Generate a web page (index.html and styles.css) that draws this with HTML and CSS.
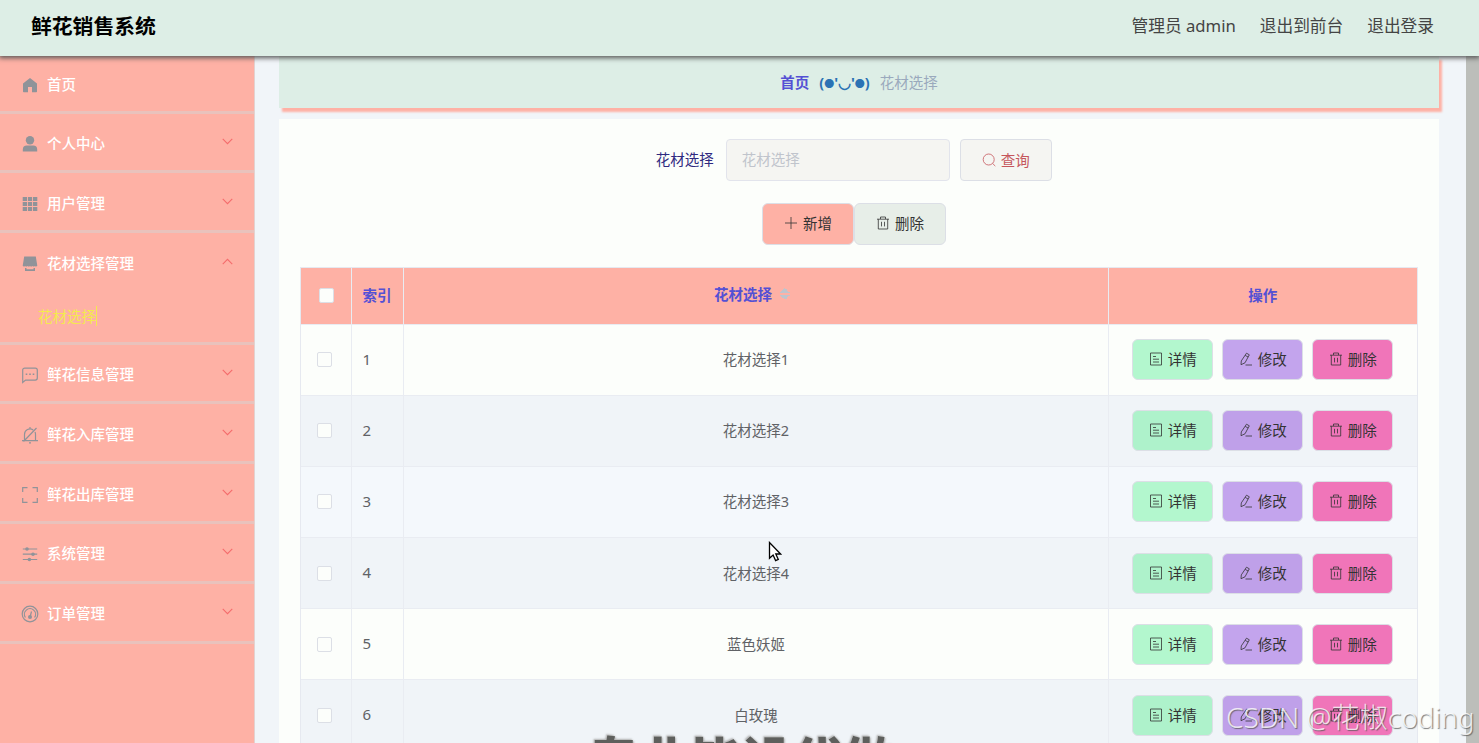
FILE: index.html
```html
<!DOCTYPE html>
<html lang="zh-CN">

<head>
    <meta charset="UTF-8">
    <meta name="viewport" content="width=device-width, initial-scale=1.0">
    <title>鲜花销售系统</title>
    <link rel="stylesheet" href="styles.css">
</head>

<body>
    <svg class="sprite">
        <symbol id="down" viewBox="0 0 12 12"><path d="M1.600 3.600 6 8l4.400-4.400" /></symbol>
        <symbol id="doc" viewBox="0 0 14 14"><path d="M1.500 1h11v12h-11zM4 4.500h3M4 7.200h6M4 10h6" /></symbol>
        <symbol id="edit" viewBox="0 0 14 14"><path d="M7.500 1.200 10.300 2.800 6 10.800 2 12.700 2.300 8.900zM6.200 3.400 9.100 5M6.500 13H13" /></symbol>
        <symbol id="trash" viewBox="0 0 14 14"><path d="M1 3.200h12M4.500 3V1h5v2M2.300 3.200V13h9.400V3.200M5.500 5.800v4.600M8.500 5.800v4.600" /></symbol>
        <symbol id="plus" viewBox="0 0 14 14"><path d="M7 1v12M1 7h12" /></symbol>
        <symbol id="search" viewBox="0 0 14 14"><circle cx="6.700" cy="6.500" r="5.500" /><path d="m10.700 10.500 2.600 2.600" /></symbol>
    </svg>

    <div class="header">
        <div class="title">鲜花销售系统</div>
        <div class="user">
            <span>管理员 admin</span>
            <span>退出到前台</span>
            <span>退出登录</span>
        </div>
    </div>

    <div class="wrap">
        <div class="menu">
            <div class="menuItem first">
                <svg class="icon" viewBox="0 0 18 18"><path class="fill" d="M9 2 16 7.400V15.500a.7.700 0 0 1-.7.700H11V11H7v5.200H2.700a.7.700 0 0 1-.7-.7V7.400z" /></svg>
                <span>首页</span>
            </div>
            <div class="menuItem">
                <svg class="icon" viewBox="0 0 18 18"><circle class="fill" cx="9" cy="5.200" r="4.200" /><path class="fill" d="M1.800 16.600v-2a4 4 0 0 1 4-4h6.400a4 4 0 0 1 4 4v2z" /></svg>
                <span>个人中心</span>
                <svg class="arrow"><use href="#down" /></svg>
            </div>
            <div class="menuItem">
                <svg class="icon" viewBox="0 0 18 18"><path class="fill" d="M1.700 2h4.300v4H1.700zM6.900 2h4.200v4H6.900zM12 2h4.300v4H12zM1.700 7h4.300v4H1.700zM6.900 7h4.200v4H6.900zM12 7h4.300v4H12zM1.700 12h4.300v4H1.700zM6.900 12h4.200v4H6.900zM12 12h4.300v4H12z" /></svg>
                <span>用户管理</span>
                <svg class="arrow"><use href="#down" /></svg>
            </div>
            <div class="subMenu">
                <div class="menuItem">
                    <svg class="icon" viewBox="0 0 18 18"><path class="fill" d="M3.200 1.500h11.600l1.500 9.300q-1 1.400-2.400.2-1.200 1.200-2.500 0-1.200 1.200-2.400 0-1.200 1.200-2.500 0-1.200 1.200-2.400 0-1.500 1.200-2.400-.2zM4 13h1.500v1.200h7V13H14v3H4z" /></svg>
                    <span>花材选择管理</span>
                    <svg class="arrow up"><use href="#down" /></svg>
                </div>
                <div class="subItem"><span>花材选择</span></div>
            </div>
            <div class="menuItem">
                <svg class="icon" viewBox="0 0 18 18"><path d="M1.700 16.500V4.100a2 2 0 0 1 2-2h10.600a2 2 0 0 1 2 2v8a2 2 0 0 1-2 2H4.600z" /><path class="fill" d="M4.700 7.400h1.600V9H4.700zM8.200 7.400h1.600V9H8.200zM11.700 7.400h1.600V9h-1.600z" /></svg>
                <span>鲜花信息管理</span>
                <svg class="arrow"><use href="#down" /></svg>
            </div>
            <div class="menuItem">
                <svg class="icon" viewBox="0 0 18 18"><path d="M1 14.600h16M3.500 14.300V8.500a5.500 5.500 0 0 1 8.700-4.500M14 6a6 6 0 0 1 .5 2.500v5.800M9 1v2M8 16.800h2M15.500 2 2.500 15.500" /></svg>
                <span>鲜花入库管理</span>
                <svg class="arrow"><use href="#down" /></svg>
            </div>
            <div class="menuItem">
                <svg class="icon" viewBox="0 0 18 18"><path d="M1.700 6V1.700H6.500M11.500 1.700h4.800V6M16.300 12v4.300h-4.800M6.500 16.300H1.700V12" /></svg>
                <span>鲜花出库管理</span>
                <svg class="arrow"><use href="#down" /></svg>
            </div>
            <div class="menuItem">
                <svg class="icon" viewBox="0 0 18 18"><path d="M1.800 4h14.400M1.800 9.200h14.400M1.800 14.500h14.400" /><circle class="fill" cx="6" cy="4" r="1.800" /><circle class="fill" cx="12" cy="9.200" r="1.800" /><circle class="fill" cx="8.400" cy="14.500" r="1.800" /></svg>
                <span>系统管理</span>
                <svg class="arrow"><use href="#down" /></svg>
            </div>
            <div class="menuItem">
                <svg class="icon" viewBox="0 0 18 18"><circle cx="9" cy="9" r="7.800" /><path d="M4.400 12.500a5.600 5.600 0 1 1 9.200 0" /><circle class="fill" cx="9" cy="12" r="2" /><path d="M9.200 11.500 10.500 6.500" /></svg>
                <span>订单管理</span>
                <svg class="arrow"><use href="#down" /></svg>
            </div>
        </div>

        <div class="main">
            <div class="crumb">
                <span class="home">首页</span>
                <span class="face">(<i>●</i>'◡'<i>●</i>)</span>
                <span class="current">花材选择</span>
            </div>

            <div class="card">
                <div class="search">
                    <label for="material">花材选择</label>
                    <input id="material" type="text" placeholder="花材选择">
                    <button class="btn query"><svg><use href="#search" /></svg>查询</button>
                </div>
                <div class="tools">
                    <button class="btn add"><svg><use href="#plus" /></svg>新增</button>
                    <button class="btn remove"><svg><use href="#trash" /></svg>删除</button>
                </div>

                <div class="table">
                    <div class="row head">
                        <div class="cell"><i class="check"></i></div>
                        <div class="cell index">索引</div>
                        <div class="cell name">花材选择<span class="sort"></span></div>
                        <div class="cell ops">操作</div>
                    </div>
                    <div class="row">
                        <div class="cell"><i class="check"></i></div>
                        <div class="cell index">1</div>
                        <div class="cell name">花材选择1</div>
                        <div class="cell ops">
                            <button class="btn detail"><svg><use href="#doc" /></svg>详情</button>
                            <button class="btn edit"><svg><use href="#edit" /></svg>修改</button>
                            <button class="btn del"><svg><use href="#trash" /></svg>删除</button>
                        </div>
                    </div>
                    <div class="row striped">
                        <div class="cell"><i class="check"></i></div>
                        <div class="cell index">2</div>
                        <div class="cell name">花材选择2</div>
                        <div class="cell ops">
                            <button class="btn detail"><svg><use href="#doc" /></svg>详情</button>
                            <button class="btn edit"><svg><use href="#edit" /></svg>修改</button>
                            <button class="btn del"><svg><use href="#trash" /></svg>删除</button>
                        </div>
                    </div>
                    <div class="row hover">
                        <div class="cell"><i class="check"></i></div>
                        <div class="cell index">3</div>
                        <div class="cell name">花材选择3</div>
                        <div class="cell ops">
                            <button class="btn detail"><svg><use href="#doc" /></svg>详情</button>
                            <button class="btn edit"><svg><use href="#edit" /></svg>修改</button>
                            <button class="btn del"><svg><use href="#trash" /></svg>删除</button>
                        </div>
                    </div>
                    <div class="row striped">
                        <div class="cell"><i class="check"></i></div>
                        <div class="cell index">4</div>
                        <div class="cell name">花材选择4</div>
                        <div class="cell ops">
                            <button class="btn detail"><svg><use href="#doc" /></svg>详情</button>
                            <button class="btn edit"><svg><use href="#edit" /></svg>修改</button>
                            <button class="btn del"><svg><use href="#trash" /></svg>删除</button>
                        </div>
                    </div>
                    <div class="row">
                        <div class="cell"><i class="check"></i></div>
                        <div class="cell index">5</div>
                        <div class="cell name">蓝色妖姬</div>
                        <div class="cell ops">
                            <button class="btn detail"><svg><use href="#doc" /></svg>详情</button>
                            <button class="btn edit"><svg><use href="#edit" /></svg>修改</button>
                            <button class="btn del"><svg><use href="#trash" /></svg>删除</button>
                        </div>
                    </div>
                    <div class="row striped">
                        <div class="cell"><i class="check"></i></div>
                        <div class="cell index">6</div>
                        <div class="cell name">白玫瑰</div>
                        <div class="cell ops">
                            <button class="btn detail"><svg><use href="#doc" /></svg>详情</button>
                            <button class="btn edit"><svg><use href="#edit" /></svg>修改</button>
                            <button class="btn del"><svg><use href="#trash" /></svg>删除</button>
                        </div>
                    </div>
                </div>
            </div>
        </div>

        <div class="scrollbar"></div>
    </div>

    <div class="caption">专业毕设代做</div>
    <div class="watermark">CSDN @花椒coding</div>
    <svg class="cursor" viewBox="0 0 14 21"><path d="M1.500 1.500v15.800l3.600-3.300 2.500 5.600 2.700-1.200-2.500-5.400h4.800z" /></svg>
</body>

</html>
```
FILE: styles.css
```css
* {
    margin: 0;
    padding: 0;
    box-sizing: border-box;
}

html {
    overflow: hidden;
}

body {
    position: relative;
    display: flex;
    flex-direction: column;
    height: 743px;
    overflow: hidden;
    background-color: #f1f5f9;
    font-family: "Noto Sans", "Noto Sans CJK SC", sans-serif;
    font-size: 14.5px;
    color: #606266;
}

svg {
    flex-shrink: 0;
    fill: none;
    stroke: currentColor;
}

.sprite {
    display: none;
}

.header {
    position: relative;
    z-index: 2;
    flex-shrink: 0;
    display: flex;
    justify-content: space-between;
    height: 56px;
    padding: 0 45px 7px 31px;
    align-items: center;
    background-color: #ddeee6;
    box-shadow: 0 1px 5px 1px #555;
}

.title {
    font-size: 20.8px;
    font-weight: bold;
    color: #000;
}

.user {
    display: flex;
    gap: 24px;
    font-size: 16.700px;
    color: #444;
}

.wrap {
    flex: 1;
    min-height: 0;
    display: flex;
}

/* 左侧菜单 */
.menu {
    flex-shrink: 0;
    width: 255px;
    background-color: #feb1a5;
    border-right: 1px solid #e3d2d0;
}

.menuItem {
    display: flex;
    align-items: center;
    height: 59.8px;
    padding: 1px 20px 0 21px;
    border-bottom: 3px solid #e9c2bc;
    color: #fff;
    font-weight: 500;
}

.menuItem.first {
    height: 57.600px;
}

.menuItem span {
    flex: 1;
    margin-left: 8px;
}

.icon {
    width: 18px;
    height: 18px;
    margin-top: 3px;
    color: #909399;
    stroke-width: 1.200;
}

.icon .fill {
    fill: currentColor;
    stroke: none;
}

.arrow {
    width: 13px;
    height: 13px;
    margin-top: -2px;
    color: #f56c6c;
}

.arrow.up {
    transform: rotate(180deg);
}

.subMenu {
    height: 111.400px;
    border-bottom: 3px solid #e9c2bc;
}

.subMenu .menuItem {
    height: 57px;
    border: none;
}

.subItem {
    padding: 16px 0 0 38px;
    line-height: 20px;
    color: #f4ea4e;
}

.subItem span {
    display: inline-block;
    border-right: 1px solid #f4ea4e;
}

/* 右侧内容 */
.main {
    flex: 1;
    min-width: 0;
    overflow: hidden;
    padding: 0 26.500px 0 24px;
}

.crumb {
    display: flex;
    align-items: center;
    justify-content: center;
    gap: 10px;
    height: 52px;
    padding-bottom: 1px;
    background-color: #ddeee6;
    box-shadow: 3px 4px 2px #feb1a5;
}

.home {
    font-weight: bold;
    color: #5450d4;
}

.face {
    font-weight: bold;
    color: #2b72b4;
}

.face i {
    display: inline-block;
    font-style: normal;
    font-size: 10px;
    vertical-align: 0;
}

.current {
    color: #9aa9bd;
}

.card {
    height: 625px;
    margin-top: 10.500px;
    padding: 20.500px 21px 0;
    background-color: #fcfefb;
}

.search {
    display: flex;
    justify-content: center;
    align-items: center;
    padding-right: 10.500px;
}

.search label {
    margin-right: 12px;
    padding-bottom: 3px;
    color: #2f2a80;
}

.search input {
    width: 224px;
    height: 42px;
    margin-right: 10px;
    padding: 0 15px 2px;
    border: 1.500px solid #e2e4ec;
    border-radius: 4px;
    background-color: #f5f5f2;
    font: inherit;
}

.search input::placeholder {
    color: #c0c4cc;
}

.btn {
    display: flex;
    justify-content: center;
    align-items: center;
    gap: 5px;
    width: 92px;
    height: 42px;
    padding-bottom: 2px;
    border: 1.500px solid #dcdfe6;
    border-radius: 6px;
    font: inherit;
    color: #333;
}

.btn svg {
    width: 14px;
    height: 14px;
    margin-top: 1px;
    stroke-width: .8;
}

.query {
    border-radius: 4px;
    background-color: #f5f5f2;
    color: #c5565c;
}

.tools {
    display: flex;
    justify-content: center;
    margin: 21.500px 0 22.500px;
    padding-right: 10px;
}

.add {
    background-color: #feb1a5;
}

.remove {
    background-color: #e7eee8;
}

.table {
    border: 1px solid #e6e9f0;
    border-bottom: none;
}

.row {
    display: grid;
    grid-template-columns: 51px 51.500px 705px 1fr;
    height: 71.150px;
    border-bottom: 1px solid #e9ecf2;
}

.row.striped {
    background-color: #f0f4f8;
}

.row.hover {
    background-color: #f4f8fc;
}

.row.head {
    height: 56.600px;
    background-color: #feb1a5;
    color: #5450d4;
    font-weight: bold;
}

.cell {
    display: flex;
    align-items: center;
    padding-left: 16px;
    border-right: 1px solid #e9ecf2;
}

.cell:last-child {
    border-right: none;
}

.head .cell:first-child {
    padding-left: 18px;
}

.check {
    width: 15px;
    height: 15px;
    border: 1px solid #dcdfe6;
    border-radius: 2px;
    background-color: #fcfefb;
}

.cell.index {
    padding: 0 0 2px 10.500px;
    font-size: 15px;
}

.head .cell.index {
    padding-bottom: 3px;
    font-size: inherit;
}

.cell.name {
    justify-content: center;
    padding: 0 0 2px 1px;
}

.head .cell.name {
    padding: 0 7px 4px 0;
}

.cell.ops {
    justify-content: center;
    gap: 9px;
    padding: 0;
}

.head .cell.ops {
    padding-bottom: 3px;
}

.sort {
    width: 10px;
    height: 12px;
    margin-left: 8px;
    background:
        conic-gradient(from 135deg at 50% 0, #c0c4cc 90deg, transparent 0) 0 7px / 10px 5px no-repeat,
        conic-gradient(from -45deg at 50% 100%, #c0c4cc 90deg, transparent 0) 0 0 / 10px 5px no-repeat;
    background:
        linear-gradient(to bottom right, transparent 50%, #c0c4cc 50%) 0 0 / 5px 5px no-repeat,
        linear-gradient(to bottom left, transparent 50%, #c0c4cc 50%) 5px 0 / 5px 5px no-repeat,
        linear-gradient(to top right, transparent 50%, #c0c4cc 50%) 0 7px / 5px 5px no-repeat,
        linear-gradient(to top left, transparent 50%, #c0c4cc 50%) 5px 7px / 5px 5px no-repeat;
}

.ops .btn {
    width: 81px;
    height: 41px;
}

.detail {
    background-color: #b3f7ce;
}

.edit {
    background-color: #c3a4ed;
}

.del {
    background-color: #f075b9;
}

.striped .detail {
    background-color: #aef2cb;
}

.striped .edit {
    background-color: #bfa0e9;
}

.scrollbar {
    width: 13.500px;
    background-color: #bcbeba;
}

.caption {
    position: absolute;
    top: 728px;
    left: 588px;
    height: 15px;
    overflow: hidden;
    line-height: 60px;
    font-family: "Noto Sans CJK SC", sans-serif;
    font-size: 51px;
    font-weight: 900;
    color: #5e5f5d;
    text-shadow: 0 0 1px #fff, 1px 1px 2px #aaa, -1px -1px 2px #aaa;
    white-space: nowrap;
}

.watermark {
    position: absolute;
    top: 697px;
    left: 1226px;
    line-height: 40px;
    font-size: 28.100px;
    font-weight: 300;
    color: rgba(255, 255, 255, .8);
    text-shadow: 1px 1px 1px rgba(90, 90, 90, .8);
    white-space: nowrap;
}

.cursor {
    position: absolute;
    top: 541px;
    left: 768px;
    width: 14px;
    height: 21px;
    fill: #fff;
    stroke: #000;
    stroke-width: 1.300;
}
```
